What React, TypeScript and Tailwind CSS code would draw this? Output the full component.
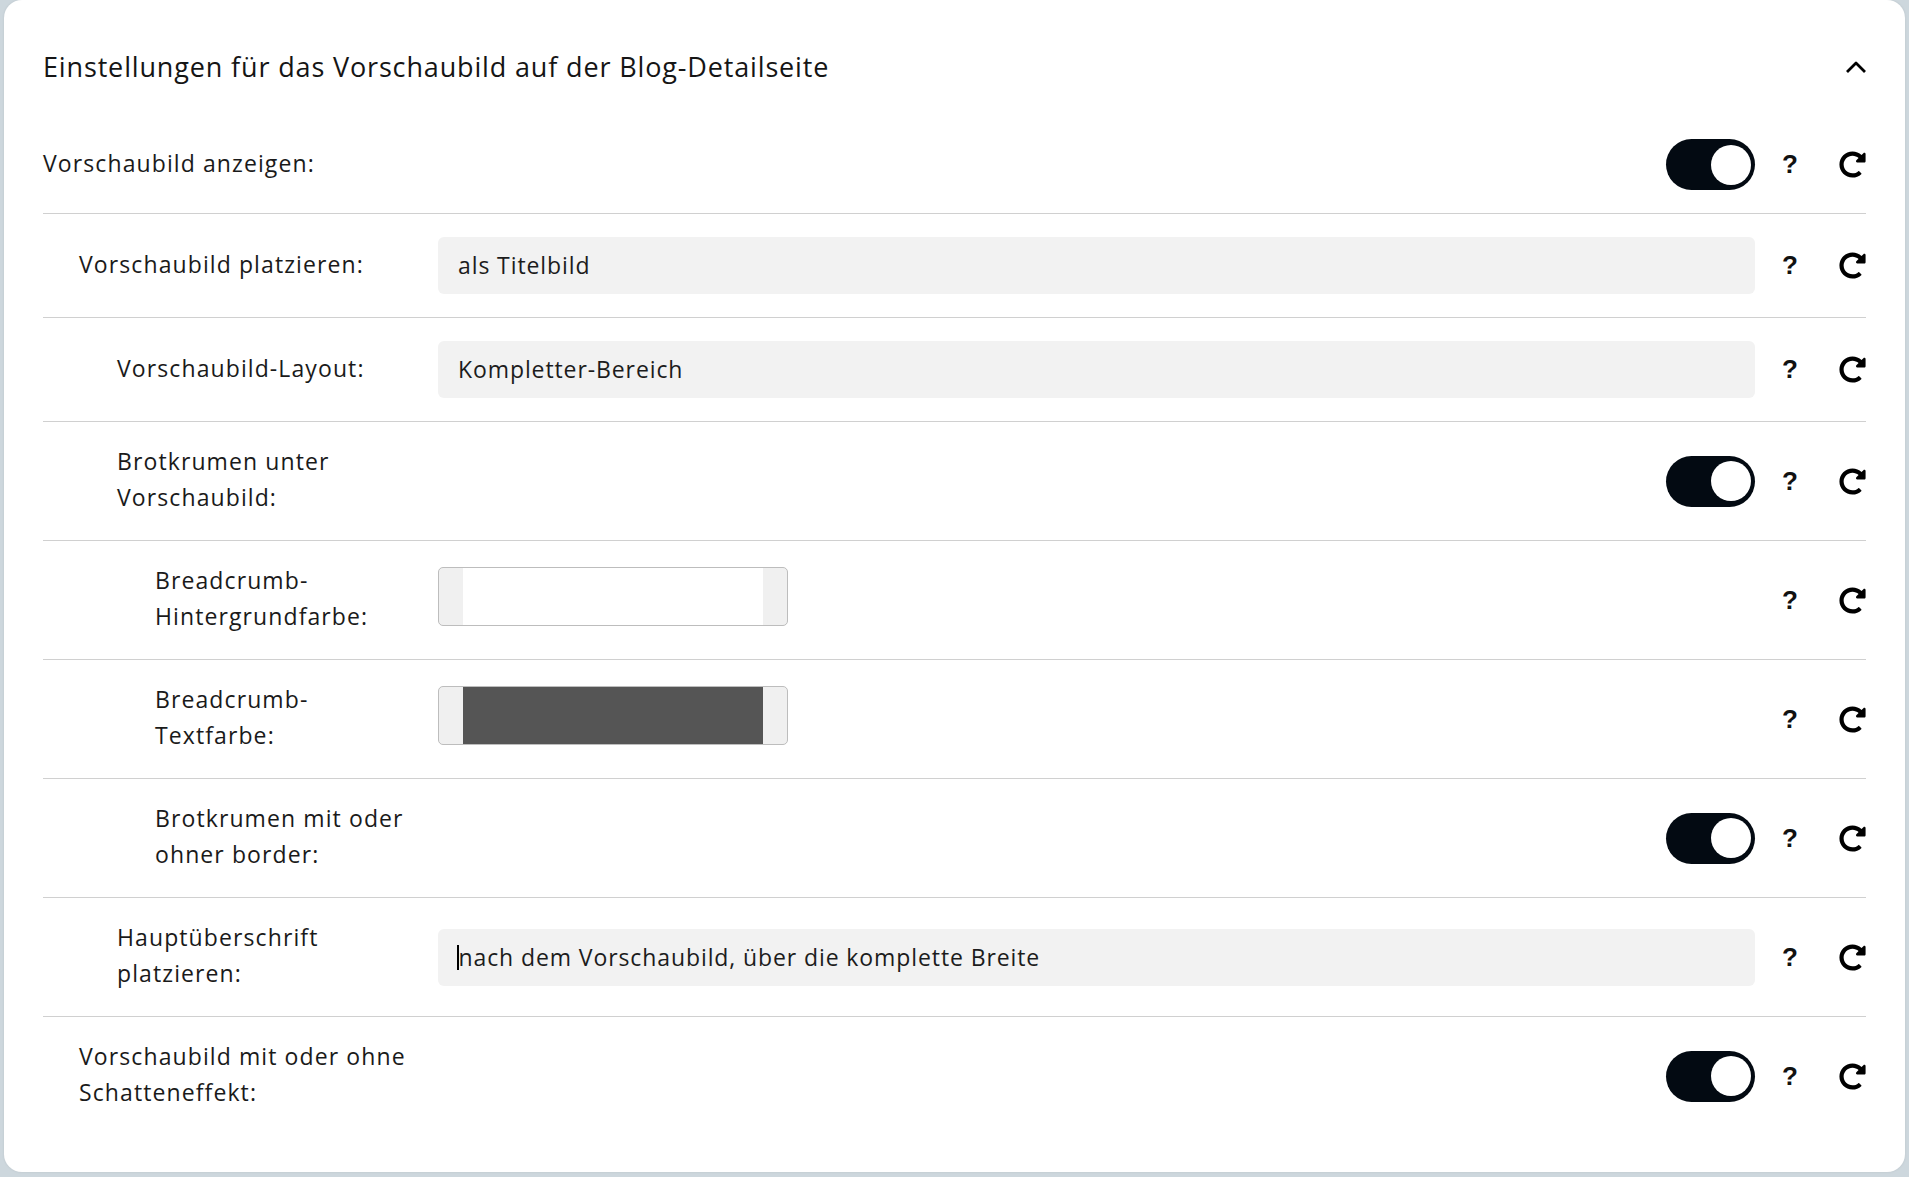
import { FaRedoAlt } from "react-icons/fa";

type Row = {
  label: string[];
  indent: number;
  type: "toggle" | "select" | "color";
  value?: string;
  color?: string;
  caret?: boolean;
};

const rows: Row[] = [
  { label: ["Vorschaubild anzeigen:"], indent: 0, type: "toggle" },
  { label: ["Vorschaubild platzieren:"], indent: 1, type: "select", value: "als Titelbild" },
  { label: ["Vorschaubild-Layout:"], indent: 2, type: "select", value: "Kompletter-Bereich" },
  { label: ["Brotkrumen unter", "Vorschaubild:"], indent: 2, type: "toggle" },
  { label: ["Breadcrumb-", "Hintergrundfarbe:"], indent: 3, type: "color", color: "#ffffff" },
  { label: ["Breadcrumb-", "Textfarbe:"], indent: 3, type: "color", color: "#555555" },
  { label: ["Brotkrumen mit oder", "ohner border:"], indent: 3, type: "toggle" },
  {
    label: ["Hauptüberschrift", "platzieren:"],
    indent: 2,
    type: "select",
    value: "nach dem Vorschaubild, über die komplette Breite",
    caret: true,
  },
  { label: ["Vorschaubild mit oder ohne", "Schatteneffekt:"], indent: 1, type: "toggle" },
];

const indents = ["pl-0", "pl-[36px]", "pl-[74px]", "pl-[112px]"];

function Toggle() {
  return (
    <div className="w-[89px] h-[51px] rounded-full bg-[#030a12] flex items-center justify-end pr-[4px]">
      <div className="w-[40px] h-[40px] rounded-full bg-white" />
    </div>
  );
}

function Control({ row }: { row: Row }) {
  if (row.type === "toggle") {
    return (
      <div className="flex-1 flex justify-end">
        <Toggle />
      </div>
    );
  }
  if (row.type === "color") {
    return (
      <div className="flex-1 relative -top-[4px]">
        <div className="w-[350px] h-[59px] rounded-[5px] border border-[#bdbdbd] bg-[#f0f0f0] px-[24px] flex">
          <div className="flex-1" style={{ backgroundColor: row.color }} />
        </div>
      </div>
    );
  }
  return (
    <div className="flex-1 h-[57px] rounded-[6px] bg-[#f2f2f2] flex items-center pl-[20px] text-[23px] tracking-[0.9px] text-[#1c1c1c]">
      {row.caret && <span className="inline-block w-[1.5px] h-[25px] bg-black -ml-[1px]" />}
      <span>{row.value}</span>
    </div>
  );
}

export default function App() {
  return (
    <div
      className="min-h-screen bg-[#cdd7dd] px-[4px] pb-[5px]"
      style={{ fontFamily: '"Open Sans", "Noto Sans", sans-serif' }}
    >
      <div className="bg-white rounded-[18px] px-[39px] pb-[37px] shadow-[0_0_3px_rgba(0,0,0,0.08)]">
        <div className="pt-[48px] pb-[30px] flex items-center justify-between">
          <h2 className="text-[27px] leading-[38px] tracking-[0.85px] text-[#151515] font-normal">
            Einstellungen für das Vorschaubild auf der Blog-Detailseite
          </h2>
          <svg width="22" height="14" viewBox="0 0 22 14" className="mr-[-1px]">
            <polyline points="2,12 11,3 20,12" fill="none" stroke="#000" strokeWidth="2.8" strokeLinejoin="round" />
          </svg>
        </div>
        {rows.map((row, i) => (
          <div
            key={i}
            className={
              "flex items-center py-[23px] " + (i < rows.length - 1 ? "border-b border-[#d0d0d0]" : "")
            }
          >
            <div
              className={
                "w-[372px] shrink-0 text-[23px] leading-[36px] tracking-[1.1px] text-[#1a1a1a] relative -top-[2px] " +
                indents[row.indent]
              }
            >
              {row.label.map((l, j) => (
                <div key={j}>{l}</div>
              ))}
            </div>
            <div className="ml-[23px] flex-1 flex items-center">
              <Control row={row} />
            </div>
            <div className="w-[111px] shrink-0 flex items-center">
              <span
                className="w-[70px] text-center text-[26px] font-bold text-[#111]"
                style={{ fontFamily: '"Liberation Sans", Arial, sans-serif' }}
              >
                ?
              </span>
              <FaRedoAlt className="ml-auto text-black" size={27} />
            </div>
          </div>
        ))}
      </div>
    </div>
  );
}
